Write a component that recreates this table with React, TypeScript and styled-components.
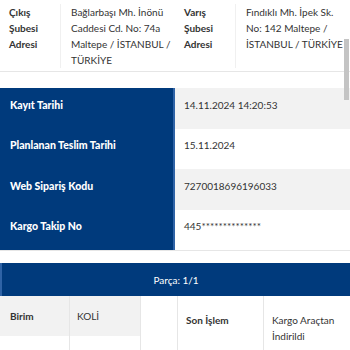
import React from "react";
import styled, { createGlobalStyle } from "styled-components";

const BLUE = "#003a7c";
const LINE = "#e6e6e6";
const STRIPE = "#f2f2f2";

const GlobalStyle = createGlobalStyle`
  html, body {
    margin: 0;
    padding: 0;
    background: #fff;
  }
  body {
    font-family: Lato, "Open Sans", sans-serif;
    color: #333;
    font-size: 10px;
    overflow: hidden;
  }
`;

const Page = styled.div`
  position: relative;
  width: 350px;
  height: 350px;
  overflow: hidden;
`;

const ScrollThumb = styled.div`
  position: absolute;
  right: 1px;
  top: 39px;
  width: 5px;
  height: 61px;
  background: #c4c4c4;
`;

/* address block */
const AddressGrid = styled.div`
  display: grid;
  grid-template-columns: 1fr 1fr;
  border-bottom: 1px solid ${LINE};
`;

const AddressCell = styled.div`
  display: grid;
  grid-template-columns: 61px 1fr;
  padding-top: 4px;
  padding-bottom: 3px;
`;

const AddressLabel = styled.div`
  padding-left: 9px;
  font-weight: 700;
  line-height: 16px;
  border-right: 1px solid #f0f0f0;
`;

const AddressValue = styled.div`
  padding-left: 10px;
  padding-right: 4px;
  line-height: 16px;
`;

/* info block */
const InfoTable = styled.div`
  margin-top: 16px;
  display: grid;
  grid-template-columns: 175px 1fr;
  border-bottom: 1px solid ${LINE};
`;

const InfoLabel = styled.div`
  background: ${BLUE};
  color: #fff;
  font-weight: 900;
  font-size: 10.5px;
  height: 40.5px;
  display: flex;
  align-items: center;
  padding-left: 10px;
  padding-bottom: 7px;
  box-sizing: border-box;
  border-right: 2px solid #2f63a6;
`;

const InfoValue = styled.div<{ $striped: boolean }>`
  background: ${({ $striped }) => ($striped ? STRIPE : "#fff")};
  height: 40.5px;
  display: flex;
  align-items: center;
  padding-left: 9px;
  padding-bottom: 7px;
  box-sizing: border-box;
`;

/* part block */
const PartHeader = styled.div`
  margin-top: 12px;
  height: 33px;
  background: ${BLUE};
  color: #fff;
  display: flex;
  align-items: center;
  justify-content: center;
  border-left: 2px solid #2f63a6;
`;

const PartBody = styled.div`
  display: flex;
  align-items: flex-start;
  gap: 36px;
`;

const SmallTable = styled.div<{ $width: number }>`
  width: ${({ $width }) => $width}px;
  display: grid;
  grid-template-columns: 70px 1fr;
  border-right: 1px solid ${LINE};
`;

const SmallLabel = styled.div<{ $striped: boolean }>`
  background: ${({ $striped }) => ($striped ? STRIPE : "#fff")};
  font-weight: 700;
  height: 40px;
  display: flex;
  align-items: center;
  padding-left: 10px;
  border-right: 1px solid ${LINE};
`;

const SmallValue = styled.div<{ $striped: boolean }>`
  background: ${({ $striped }) => ($striped ? STRIPE : "#fff")};
  height: 40px;
  display: flex;
  align-items: center;
  padding-left: 7px;
`;

const StatusTable = styled.div`
  flex: 1;
  display: grid;
  grid-template-columns: 86px 1fr;
  border-left: 1px solid ${LINE};
  border-bottom: 1px solid ${LINE};
`;

const StatusLabel = styled.div`
  font-weight: 700;
  padding: 16px 0 12px 8px;
  line-height: 16px;
  border-right: 1px solid ${LINE};
`;

const StatusValue = styled.div`
  padding: 16px 8px 12px 8px;
  line-height: 16px;
`;

const info = [
  ["Kayıt Tarihi", "14.11.2024 14:20:53"],
  ["Planlanan Teslim Tarihi", "15.11.2024"],
  ["Web Sipariş Kodu", "7270018696196033"],
  ["Kargo Takip No", "445**************"],
];

const parts = [
  ["Birim", "KOLİ"],
  ["Desi", "2"],
];

export default function App() {
  return (
    <Page>
      <GlobalStyle />
      <AddressGrid>
        <AddressCell>
          <AddressLabel>
            Çıkış
            <br />
            Şubesi
            <br />
            Adresi
          </AddressLabel>
          <AddressValue>Bağlarbaşı Mh. İnönü Caddesi Cd. No: 74a Maltepe / İSTANBUL / TÜRKİYE</AddressValue>
        </AddressCell>
        <AddressCell>
          <AddressLabel>
            Varış
            <br />
            Şubesi
            <br />
            Adresi
          </AddressLabel>
          <AddressValue>Fındıklı Mh. İpek Sk. No: 142 Maltepe / İSTANBUL / TÜRKİYE</AddressValue>
        </AddressCell>
      </AddressGrid>

      <InfoTable>
        {info.map(([label, value], i) => (
          <React.Fragment key={label}>
            <InfoLabel>{label}</InfoLabel>
            <InfoValue $striped={i % 2 === 0}>{value}</InfoValue>
          </React.Fragment>
        ))}
      </InfoTable>

      <PartHeader>Parça: 1/1</PartHeader>
      <PartBody>
        <SmallTable $width={140}>
          {parts.map(([label, value], i) => (
            <React.Fragment key={label}>
              <SmallLabel $striped={i % 2 === 0}>{label}</SmallLabel>
              <SmallValue $striped={i % 2 === 0}>{value}</SmallValue>
            </React.Fragment>
          ))}
        </SmallTable>
        <StatusTable>
          <StatusLabel>Son İşlem</StatusLabel>
          <StatusValue>Kargo Araçtan İndirildi</StatusValue>
        </StatusTable>
      </PartBody>
      <ScrollThumb />
    </Page>
  );
}
